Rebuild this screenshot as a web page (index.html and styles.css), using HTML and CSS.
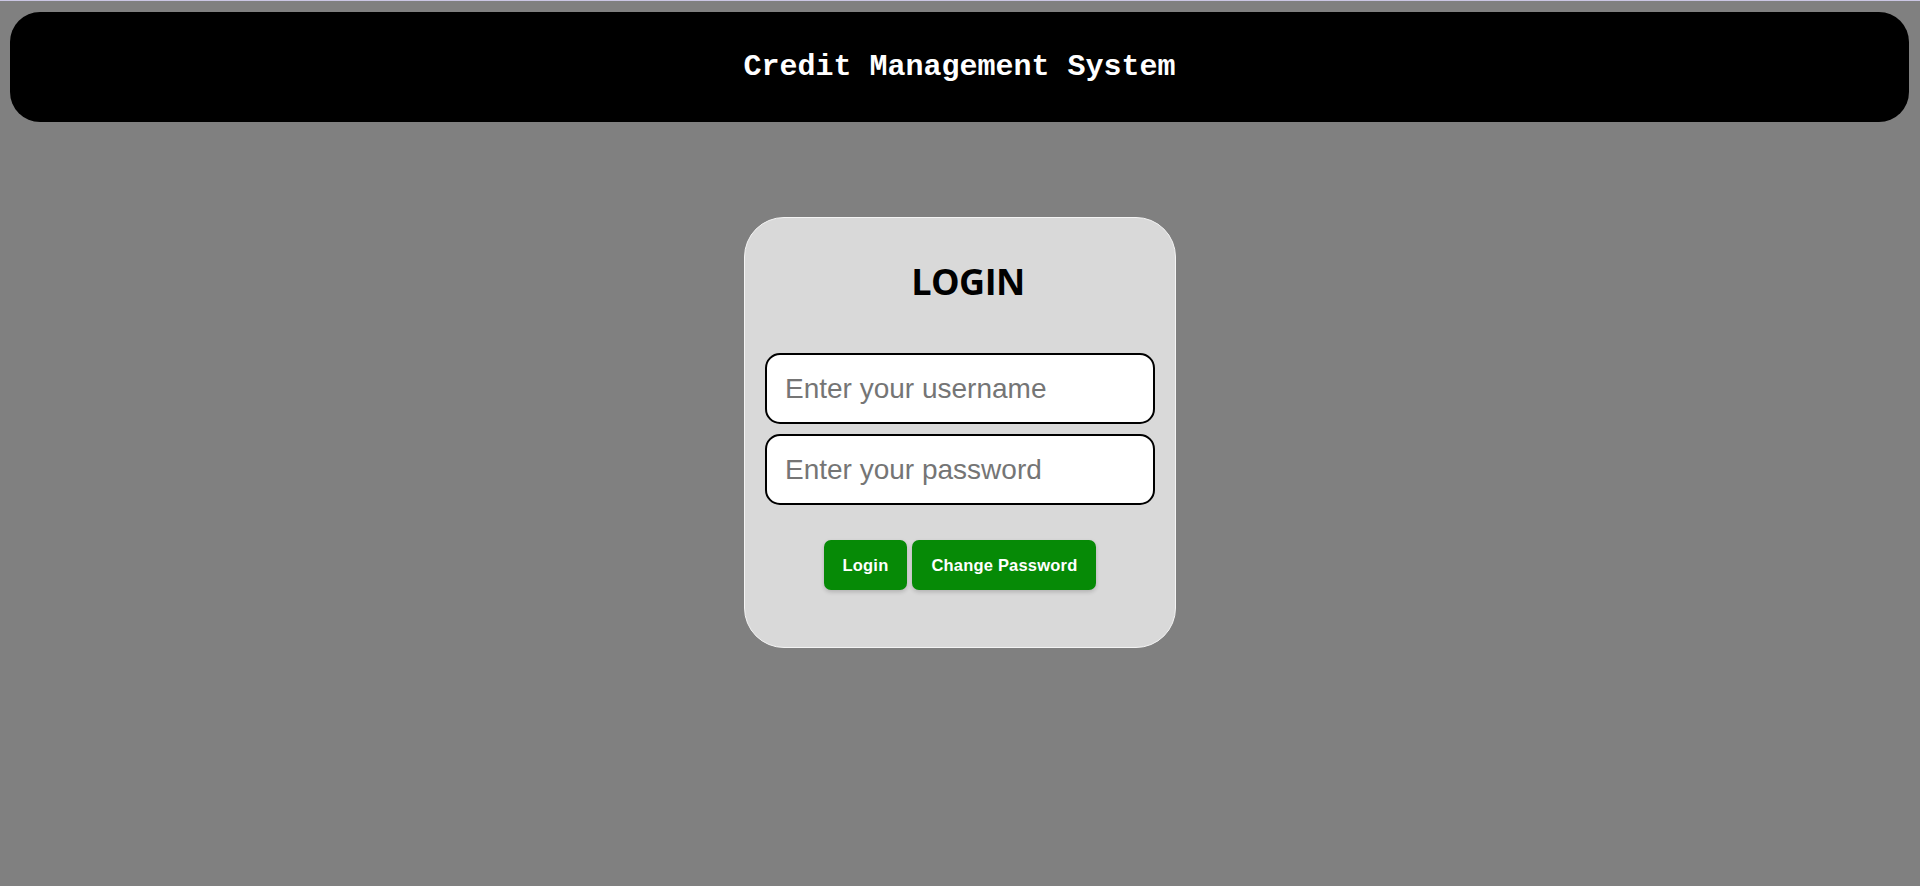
FILE: index.html
```html
<!DOCTYPE html>
<html lang="en">
<head>
<meta charset="utf-8">
<title>Credit Management System</title>
<link rel="stylesheet" href="styles.css">
</head>
<body>
  <header class="topbar">
    <h2 class="topbar-title">Credit Management System</h2>
  </header>
  <main class="main">
    <form class="login-card" onsubmit="return false">
      <h1 class="login-title">LOGIN</h1>
      <div class="fields">
        <input class="field" type="text" placeholder="Enter your username">
        <input class="field" type="password" placeholder="Enter your password">
      </div>
      <div class="actions">
        <button class="btn" type="button">Login</button>
        <button class="btn" type="button">Change Password</button>
      </div>
    </form>
  </main>
</body>
</html>
```
FILE: styles.css
```css
html, body {
  margin: 0;
  padding: 0;
}
body {
  background: #808080;
  border-top: 1px solid #cbc7e4;
  min-height: 885px;
  box-sizing: border-box;
}
.topbar {
  margin: 11px 11px 0 10px;
  height: 110px;
  background: #000;
  border-radius: 30px;
  display: flex;
  align-items: center;
  justify-content: center;
}
.topbar-title {
  margin: 0;
  color: #fff;
  font-family: "Liberation Mono", "Courier New", monospace;
  font-weight: 700;
  font-size: 30px;
  line-height: 34px;
}
.main {
  display: flex;
  justify-content: center;
  padding-top: 95px;
}
.login-card {
  box-sizing: border-box;
  width: 432px;
  height: 431px;
  background: #d9d9d9;
  border: 1px solid #f4f4f4;
  border-radius: 40px;
  padding: 39px 20px 0;
  display: flex;
  flex-direction: column;
}
.login-title {
  margin: 0;
  padding-left: 16px;
  text-align: center;
  font-family: "Open Sans", "Noto Sans", sans-serif;
  font-weight: 700;
  font-size: 36px;
  line-height: 49px;
  color: #000;
  letter-spacing: -0.5px;
}
.fields {
  margin-top: 47px;
  display: flex;
  flex-direction: column;
  gap: 10px;
}
.field {
  box-sizing: border-box;
  width: 100%;
  height: 71px;
  margin: 0;
  border: 2px solid #000;
  border-radius: 15px;
  background: #fff;
  padding: 0 18px;
  font-family: "Liberation Sans", Arial, sans-serif;
  font-size: 28px;
  color: #000;
  outline: none;
}
.field::placeholder {
  color: #757575;
}
.actions {
  margin-top: 35px;
  display: flex;
  justify-content: center;
  gap: 5px;
}
.btn {
  height: 50px;
  padding: 0 19px;
  border: none;
  border-radius: 7px;
  background: #068a06;
  color: #fff;
  font-family: "Liberation Sans", Arial, sans-serif;
  font-weight: 700;
  font-size: 16.5px;
  letter-spacing: 0.2px;
  box-shadow: 0 2px 4px rgba(0, 0, 0, 0.18);
  cursor: pointer;
}
```
